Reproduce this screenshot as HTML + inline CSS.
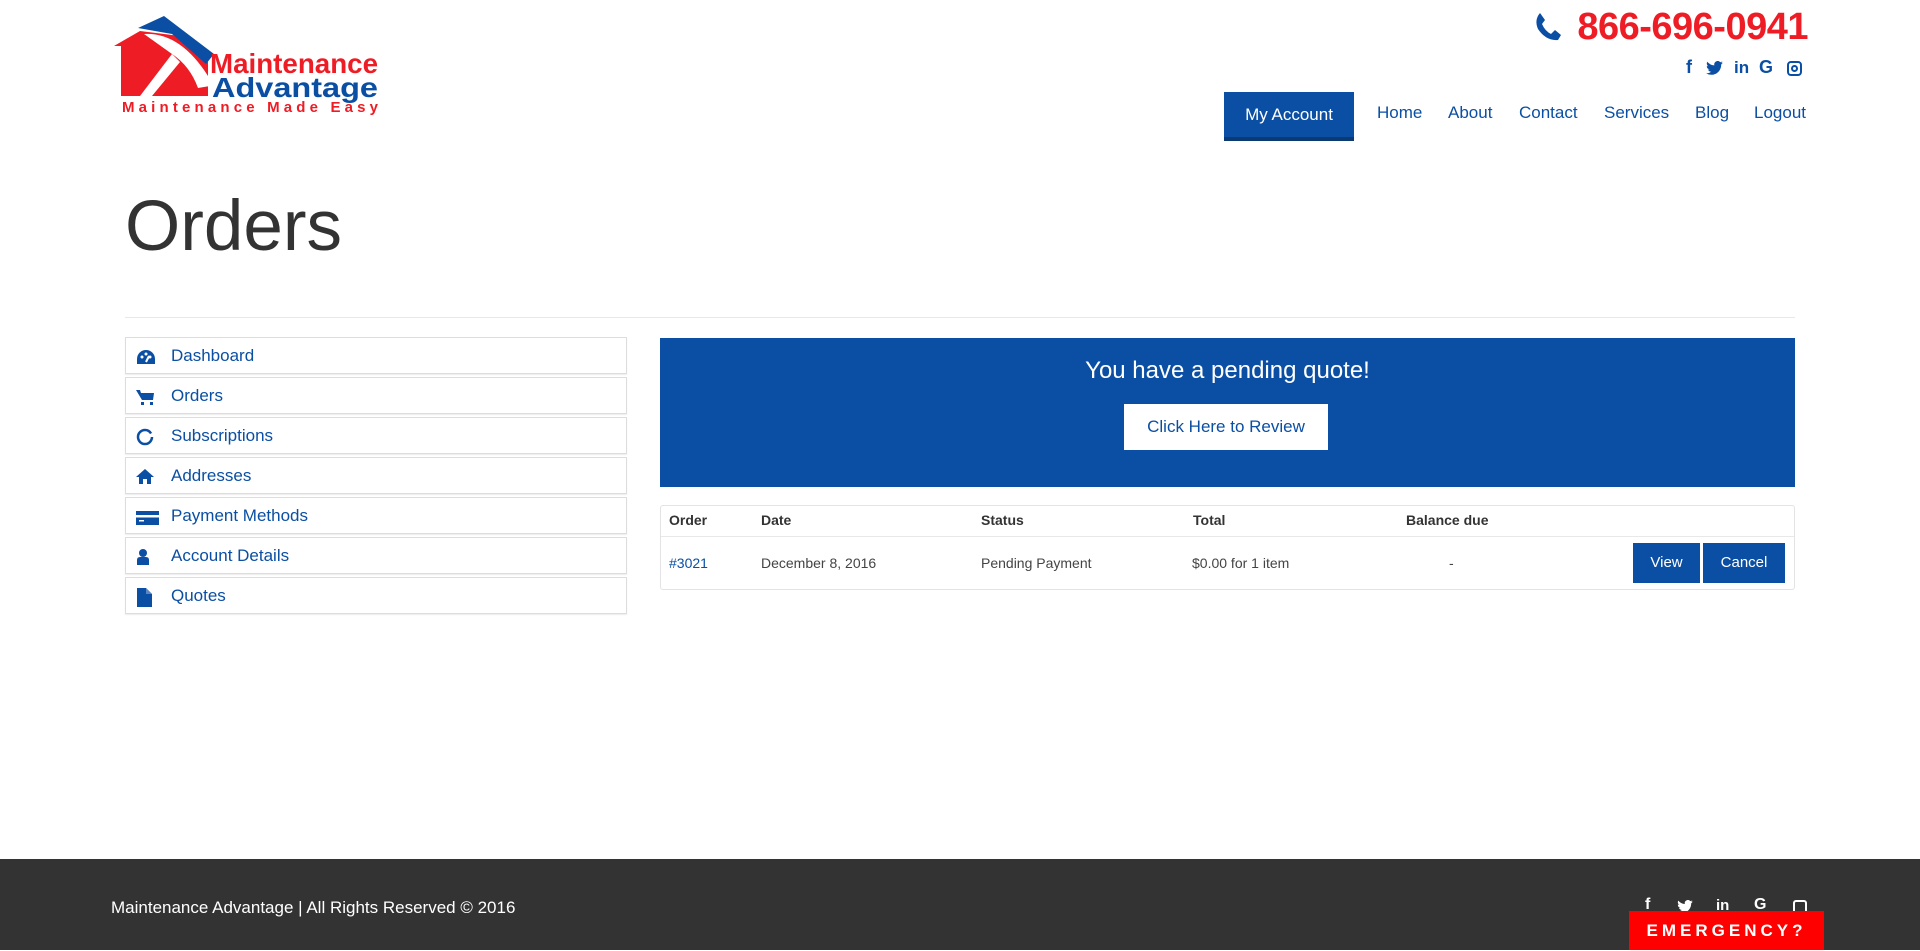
<!DOCTYPE html>
<html><head><meta charset="utf-8"><style>
*{box-sizing:border-box;margin:0;padding:0}
body{width:1920px;height:950px;position:relative;overflow:hidden;background:#fff;font-family:"Liberation Sans",Arial,sans-serif;color:#333}
.a{position:absolute}
.blue{color:#0a4fa3}
.nav a{position:absolute;top:103px;font-size:17px;color:#0a4fa3;text-decoration:none}
.side{position:absolute;left:125px;width:502px;height:37px;border:1px solid #ddd;box-shadow:0 1px 1px rgba(0,0,0,.08)}
.side span{position:absolute;left:45px;top:8px;font-size:17px;color:#0a4fa3}
.side svg{position:absolute;left:10px;top:10px}
.th{position:absolute;top:512px;font-size:14px;font-weight:bold;color:#333}
.td{position:absolute;top:555px;font-size:14px;color:#444}
</style></head><body>
<!-- logo -->
<svg class="a" style="left:110px;top:14px" width="275" height="104" viewBox="0 0 275 104">
<polygon points="4,32 30,17 70,22 98,48 98,82 11,82 11,32" fill="#ee1c25"/>
<polygon points="28,14 54,2 104,40 96,50 62,20" fill="#0a4fa3"/>
<path d="M34,20 Q70,18 98,62 L100,72 L88,74 Q80,52 62,40 Z" fill="#fff"/>
<path d="M62,40 L30,82 L42,82 L70,48 Z" fill="#fff"/>
<text x="100" y="59" font-family="Liberation Sans" font-weight="bold" font-size="28" fill="#ee1c25" textLength="168" lengthAdjust="spacingAndGlyphs">Maintenance</text>
<text x="102" y="83" font-family="Liberation Sans" font-weight="bold" font-size="28" fill="#0a4fa3" textLength="166" lengthAdjust="spacingAndGlyphs">Advantage</text>
<text x="12" y="98" font-family="Liberation Sans" font-weight="bold" font-size="15" fill="#ee1c25" textLength="256" lengthAdjust="spacing">Maintenance Made Easy</text>
</svg>
<!-- phone -->
<svg class="a" style="left:1534px;top:12px" width="28" height="30" viewBox="0 0 28 30"><path d="M6,1 L11,8 L8,12 Q11,19 17,22 L21,18 L27,23 L24,28 Q12,29 4,17 Q0,8 6,1Z" fill="#0a4fa3"/></svg>
<div class="a" style="right:112px;top:6px;font-size:38px;font-weight:bold;color:#ee1c25;letter-spacing:-0.5px">866-696-0941</div>
<div class="a blue" style="left:1686px;top:57px;font-size:18px;font-weight:bold">f</div>
<svg class="a" style="left:1706px;top:61px" width="17" height="14" viewBox="0 0 24 20"><path d="M24,2.4a10,10 0 0 1-2.8.8A5,5 0 0 0 23.3.5a10,10 0 0 1-3.1 1.2A4.9,4.9 0 0 0 11.8,6.2 14,14 0 0 1 1.7,1 4.9,4.9 0 0 0 3.2,7.6 4.9,4.9 0 0 1 1,7v.1a4.9,4.9 0 0 0 3.9,4.8 5,5 0 0 1-2.2.1 4.9,4.9 0 0 0 4.6,3.4A9.9,9.9 0 0 1 0,17.5 14,14 0 0 0 7.5,19.7c9,0 14-7.5 14-14v-.6A10,10 0 0 0 24,2.4z" fill="#0a4fa3"/></svg>
<div class="a blue" style="left:1734px;top:58px;font-size:17px;font-weight:bold">in</div>
<div class="a blue" style="left:1759px;top:57px;font-size:18px;font-weight:bold">G</div>
<div class="a" style="left:1787px;top:61px;width:15px;height:15px;border:2px solid #0a4fa3;border-radius:4px"><div style="margin:2px auto;width:7px;height:7px;border:2px solid #0a4fa3;border-radius:50%"></div></div>
<!-- nav -->
<div class="a" style="left:1224px;top:92px;width:130px;height:49px;background:#0a4fa3;border-bottom:4px solid #0b3a73;color:#fff;font-size:17px;text-align:center;line-height:45px">My Account</div>
<div class="nav"><a style="left:1377px">Home</a><a style="left:1448px">About</a><a style="left:1519px">Contact</a><a style="left:1604px">Services</a><a style="left:1695px">Blog</a><a style="left:1754px">Logout</a></div>
<!-- title -->
<div class="a" style="left:125px;top:186px;font-size:71px;color:#333">Orders</div>
<div class="a" style="left:125px;top:317px;width:1670px;height:1px;background:#e8e8e8"></div>
<!-- sidebar -->
<div class="side" style="top:337px"><svg width="20" height="18" viewBox="0 0 20 18"><path d="M10,2 A9,9 0 0 0 1,11 L1,16 L19,16 L19,11 A9,9 0 0 0 10,2Z" fill="#0a4fa3"/><circle cx="6" cy="9" r="1.5" fill="#fff"/><circle cx="10" cy="6" r="1.5" fill="#fff"/><circle cx="14" cy="9" r="1.5" fill="#fff"/><path d="M10,14 L13,8" stroke="#fff" stroke-width="2"/></svg><span>Dashboard</span></div>
<div class="side" style="top:377px"><svg width="20" height="18" viewBox="0 0 20 18"><path d="M0,2 L4,2 L5,5 L18,5 L17,12 L6,12 Z" fill="#0a4fa3"/><rect x="5" y="14" width="3" height="3" fill="#0a4fa3"/><rect x="14" y="14" width="3" height="3" fill="#0a4fa3"/></svg><span>Orders</span></div>
<div class="side" style="top:417px"><svg width="20" height="18" viewBox="0 0 20 18"><circle cx="9" cy="9" r="7" fill="none" stroke="#0a4fa3" stroke-width="2.5" stroke-dasharray="40 4"/></svg><span>Subscriptions</span></div>
<div class="side" style="top:457px"><svg width="20" height="18" viewBox="0 0 20 18"><path d="M9,1 L18,9 L15,9 L15,16 L11,16 L11,11 L7,11 L7,16 L3,16 L3,9 L0,9Z" fill="#0a4fa3"/></svg><span>Addresses</span></div>
<div class="side" style="top:497px"><svg width="24" height="18" viewBox="0 0 24 18"><rect x="0" y="3" width="23" height="14" fill="#0a4fa3"/><rect x="0" y="7" width="23" height="2.5" fill="#fff"/><rect x="3" y="12" width="5" height="1.5" fill="#fff"/></svg><span>Payment Methods</span></div>
<div class="side" style="top:537px"><svg width="20" height="18" viewBox="0 0 20 18"><circle cx="7" cy="5" r="4" fill="#0a4fa3"/><path d="M1,17 L1,12 Q1,9 4,9 L10,9 Q13,9 13,12 L13,17Z" fill="#0a4fa3"/></svg><span>Account Details</span></div>
<div class="side" style="top:577px"><svg width="20" height="20" viewBox="0 0 20 20"><path d="M1,0 L10,0 L16,6 L16,19 L1,19Z" fill="#0a4fa3"/><path d="M10,0 L10,6 L16,6" fill="#5b86c4"/></svg><span>Quotes</span></div>
<!-- banner -->
<div class="a" style="left:660px;top:338px;width:1135px;height:149px;background:#0a4fa3"></div>
<div class="a" style="left:660px;top:357px;width:1135px;text-align:center;color:#fff;font-size:24px">You have a pending quote!</div>
<div class="a" style="left:1124px;top:404px;width:204px;height:46px;background:#fff;color:#0a4fa3;font-size:17px;text-align:center;line-height:46px">Click Here to Review</div>
<!-- table -->
<div class="a" style="left:660px;top:505px;width:1135px;height:85px;border:1px solid #e3e3e3;border-radius:3px"></div>
<div class="a" style="left:661px;top:536px;width:1133px;height:1px;background:#e8e8e8"></div>
<div class="th" style="left:669px">Order</div><div class="th" style="left:761px">Date</div><div class="th" style="left:981px">Status</div><div class="th" style="left:1193px">Total</div><div class="th" style="left:1406px">Balance due</div>
<div class="td" style="left:669px;color:#0a4fa3">#3021</div><div class="td" style="left:761px">December 8, 2016</div><div class="td" style="left:981px">Pending Payment</div><div class="td" style="left:1192px">$0.00 for 1 item</div><div class="td" style="left:1449px">-</div>
<div class="a" style="left:1633px;top:543px;width:67px;height:40px;background:#0a4fa3;color:#fff;font-size:15px;text-align:center;line-height:40px">View</div>
<div class="a" style="left:1703px;top:543px;width:82px;height:40px;background:#0a4fa3;color:#fff;font-size:15px;text-align:center;line-height:40px">Cancel</div>
<!-- footer -->
<div class="a" style="left:0;top:859px;width:1920px;height:91px;background:#333"></div>
<div class="a" style="left:111px;top:898px;color:#fff;font-size:17px">Maintenance Advantage | All Rights Reserved © 2016</div>
<div class="a" style="left:1645px;top:896px;color:#fff;font-size:16px;font-weight:bold">f</div>
<svg class="a" style="left:1677px;top:900px" width="16" height="13" viewBox="0 0 24 20"><path d="M24,2.4a10,10 0 0 1-2.8.8A5,5 0 0 0 23.3.5a10,10 0 0 1-3.1 1.2A4.9,4.9 0 0 0 11.8,6.2 14,14 0 0 1 1.7,1 4.9,4.9 0 0 0 3.2,7.6 4.9,4.9 0 0 1 1,7v.1a4.9,4.9 0 0 0 3.9,4.8 5,5 0 0 1-2.2.1 4.9,4.9 0 0 0 4.6,3.4A9.9,9.9 0 0 1 0,17.5 14,14 0 0 0 7.5,19.7c9,0 14-7.5 14-14v-.6A10,10 0 0 0 24,2.4z" fill="#fff"/></svg>
<div class="a" style="left:1716px;top:897px;color:#fff;font-size:15px;font-weight:bold">in</div>
<div class="a" style="left:1754px;top:896px;color:#fff;font-size:16px;font-weight:bold">G</div>
<div class="a" style="left:1793px;top:900px;width:14px;height:14px;border:2px solid #fff;border-radius:3px"></div>
<div class="a" style="left:1629px;top:911px;width:195px;height:39px;background:#ff0000;color:#fff;font-size:17px;font-weight:bold;letter-spacing:4px;text-align:center;line-height:40px">EMERGENCY?</div>
</body></html>
